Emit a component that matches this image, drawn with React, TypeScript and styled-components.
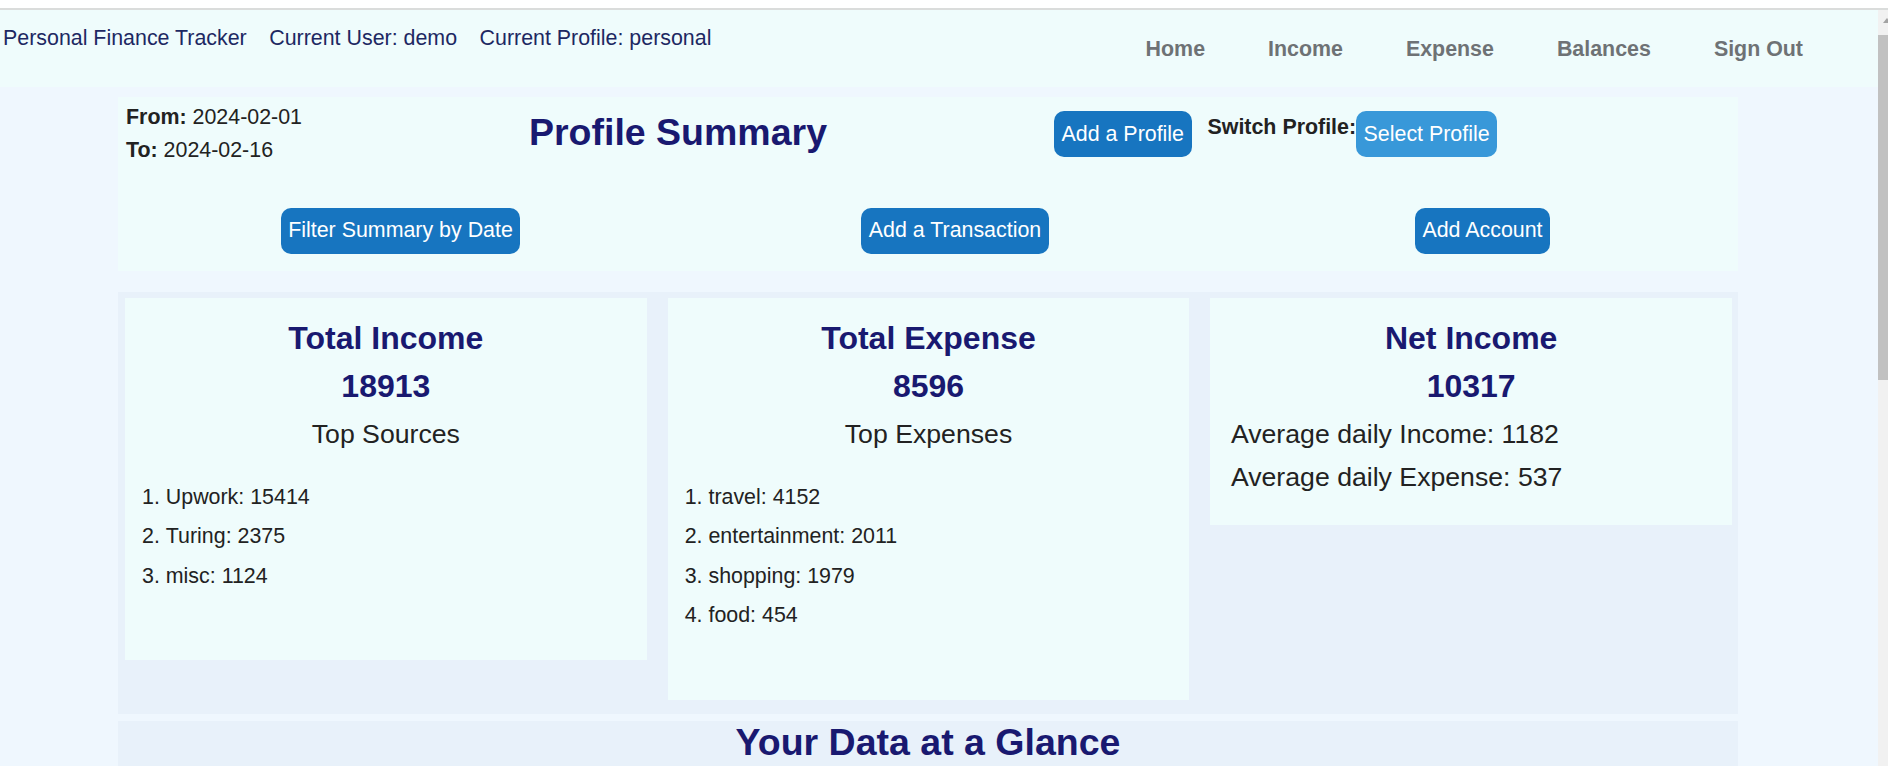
import React from "react";
import styled, { createGlobalStyle } from "styled-components";

const GlobalStyle = createGlobalStyle`
  html, body { margin: 0; padding: 0; overflow: hidden; }
  body { font-family: "Liberation Sans", Arial, Helvetica, sans-serif; background: #ffffff; }
  * { box-sizing: border-box; }
`;

const NAVY = "#191970";
const TEXT = "#222222";

const Frame = styled.div`
  height: 766px;
  display: flex;
  flex-direction: column;
  overflow: hidden;
  background: #ffffff;
`;

const BrowserEdge = styled.div`
  height: 10px;
  flex: none;
  background: #ffffff;
  border-bottom: 2px solid #dadcdb;
`;

const WindowArea = styled.div`
  flex: 1;
  min-height: 0;
  display: flex;
`;

const Viewport = styled.div`
  flex: 1;
  min-width: 0;
  overflow: hidden;
  background: #eff7fe;
`;

const Scrollbar = styled.div`
  width: 10px;
  flex: none;
  display: flex;
  flex-direction: column;
  background: #f1f1f1;
  overflow: hidden;
`;

const ScrollArrow = styled.div`
  height: 25px;
  display: flex;
  justify-content: flex-end;
  align-items: center;
  padding-bottom: 4px;
`;

const ArrowGlyph = styled.span`
  width: 0;
  height: 0;
  margin-right: -3px;
  border-left: 4px solid transparent;
  border-right: 4px solid transparent;
  border-bottom: 5px solid #a3a3a3;
`;

const ScrollThumb = styled.div`
  height: 345px;
  background: #c1c1c1;
`;

const Header = styled.header`
  height: 77px;
  background: #effcfc;
  display: flex;
  justify-content: space-between;
  align-items: flex-start;
  padding: 0 75px 0 3px;
  font-size: 21.4px;
  line-height: normal;
`;

const Brand = styled.div`
  display: flex;
  gap: 22.5px;
  padding-top: 16px;
  color: #1d2862;
`;

const Nav = styled.nav`
  display: flex;
  gap: 63px;
  padding-top: 27px;
`;

const NavLink = styled.a`
  color: #6e7275;
  font-weight: bold;
  text-decoration: none;
  cursor: pointer;
`;

const Main = styled.main`
  width: 1620px;
  margin-left: 118px;
  padding-top: 10px;
`;

const SummaryBox = styled.section`
  background: #effcfc;
  padding: 3px 8px 17px;
`;

const TopRow = styled.div`
  display: flex;
  align-items: flex-start;
  gap: 227px;
`;

const DateBlock = styled.div`
  padding-top: 1px;
  font-size: 21.4px;
  line-height: 32.5px;
  color: ${TEXT};
`;

const DateLabel = styled.b`
  font-weight: bold;
`;

const PageTitle = styled.h1`
  margin: 11px 0 0;
  font-size: 37.5px;
  line-height: normal;
  font-weight: bold;
  color: ${NAVY};
`;

const ProfileControls = styled.div`
  display: flex;
  align-items: flex-start;
  margin-top: 11px;
`;

const Button = styled.button<{ $tone?: "primary" | "light"; $gap?: number }>`
  border: none;
  border-radius: 10px;
  padding: 10.5px 7.5px;
  font-family: inherit;
  font-size: 21.4px;
  line-height: normal;
  color: #ffffff;
  cursor: pointer;
  background: ${(p) => (p.$tone === "light" ? "#3898d9" : "#1775c0")};
  margin-right: ${(p) => p.$gap ?? 0}px;
`;

const SwitchLabel = styled.span`
  font-size: 21.4px;
  line-height: 32px;
  font-weight: bold;
  color: ${TEXT};
`;

const ActionRow = styled.div`
  display: grid;
  grid-template-columns: 549px 560px 1fr;
  justify-items: center;
  margin-top: 41.5px;
`;

const CardsSection = styled.section`
  margin-top: 21px;
  background: #e8f1fa;
  padding: 6px 6px 14px 7px;
  display: grid;
  grid-template-columns: repeat(3, 1fr);
  column-gap: 21px;
  align-items: start;
`;

const Card = styled.div`
  background: #effcfc;
  padding-top: 16px;
  text-align: center;
`;

const CardTitle = styled.h2`
  margin: 0;
  font-size: 32px;
  line-height: 48px;
  font-weight: bold;
  color: ${NAVY};
`;

const Amount = styled.div`
  font-size: 32px;
  line-height: 48px;
  font-weight: bold;
  color: ${NAVY};
`;

const SubHeading = styled.h3`
  margin: 0;
  font-size: 26.67px;
  line-height: 48px;
  font-weight: normal;
  color: ${TEXT};
`;

const RankList = styled.ol`
  margin: 20px 0 64px;
  padding: 0 0 0 17px;
  list-style-position: inside;
  text-align: left;
  font-size: 21.4px;
  line-height: 39.5px;
  color: ${TEXT};
`;

const AvgBlock = styled.div`
  padding: 3.5px 20.6px 26.7px;
  text-align: left;
  font-size: 26.67px;
  line-height: 42.5px;
  color: ${TEXT};
`;

const GlanceSection = styled.section`
  margin-top: 7px;
  background: #e8f1fa;
  min-height: 700px;
`;

const GlanceTitle = styled.h1`
  margin: 0;
  text-align: center;
  font-size: 37.5px;
  line-height: normal;
  font-weight: bold;
  color: ${NAVY};
`;

const incomeSources = [
  { name: "Upwork", value: 15414 },
  { name: "Turing", value: 2375 },
  { name: "misc", value: 1124 },
];

const expenseCategories = [
  { name: "travel", value: 4152 },
  { name: "entertainment", value: 2011 },
  { name: "shopping", value: 1979 },
  { name: "food", value: 454 },
];

export default function App() {
  return (
    <Frame>
      <GlobalStyle />
      <BrowserEdge />
      <WindowArea>
        <Viewport>
          <Header>
            <Brand>
              <span>Personal Finance Tracker</span>
              <span>Current User: demo</span>
              <span>Current Profile: personal</span>
            </Brand>
            <Nav>
              <NavLink>Home</NavLink>
              <NavLink>Income</NavLink>
              <NavLink>Expense</NavLink>
              <NavLink>Balances</NavLink>
              <NavLink>Sign Out</NavLink>
            </Nav>
          </Header>
          <Main>
            <SummaryBox>
              <TopRow>
                <DateBlock>
                  <div>
                    <DateLabel>From:</DateLabel> 2024-02-01
                  </div>
                  <div>
                    <DateLabel>To:</DateLabel> 2024-02-16
                  </div>
                </DateBlock>
                <PageTitle>Profile Summary</PageTitle>
                <ProfileControls>
                  <Button $gap={16}>Add a Profile</Button>
                  <SwitchLabel>Switch Profile:</SwitchLabel>
                  <Button $tone="light">Select Profile</Button>
                </ProfileControls>
              </TopRow>
              <ActionRow>
                <Button>Filter Summary by Date</Button>
                <Button>Add a Transaction</Button>
                <Button>Add Account</Button>
              </ActionRow>
            </SummaryBox>

            <CardsSection>
              <Card>
                <CardTitle>Total Income</CardTitle>
                <Amount>18913</Amount>
                <SubHeading>Top Sources</SubHeading>
                <RankList>
                  {incomeSources.map((s) => (
                    <li key={s.name}>
                      {s.name}: {s.value}
                    </li>
                  ))}
                </RankList>
              </Card>
              <Card>
                <CardTitle>Total Expense</CardTitle>
                <Amount>8596</Amount>
                <SubHeading>Top Expenses</SubHeading>
                <RankList>
                  {expenseCategories.map((s) => (
                    <li key={s.name}>
                      {s.name}: {s.value}
                    </li>
                  ))}
                </RankList>
              </Card>
              <Card>
                <CardTitle>Net Income</CardTitle>
                <Amount>10317</Amount>
                <AvgBlock>
                  <div>Average daily Income: 1182</div>
                  <div>Average daily Expense: 537</div>
                </AvgBlock>
              </Card>
            </CardsSection>

            <GlanceSection>
              <GlanceTitle>Your Data at a Glance</GlanceTitle>
            </GlanceSection>
          </Main>
        </Viewport>
        <Scrollbar>
          <ScrollArrow>
            <ArrowGlyph />
          </ScrollArrow>
          <ScrollThumb />
        </Scrollbar>
      </WindowArea>
    </Frame>
  );
}
